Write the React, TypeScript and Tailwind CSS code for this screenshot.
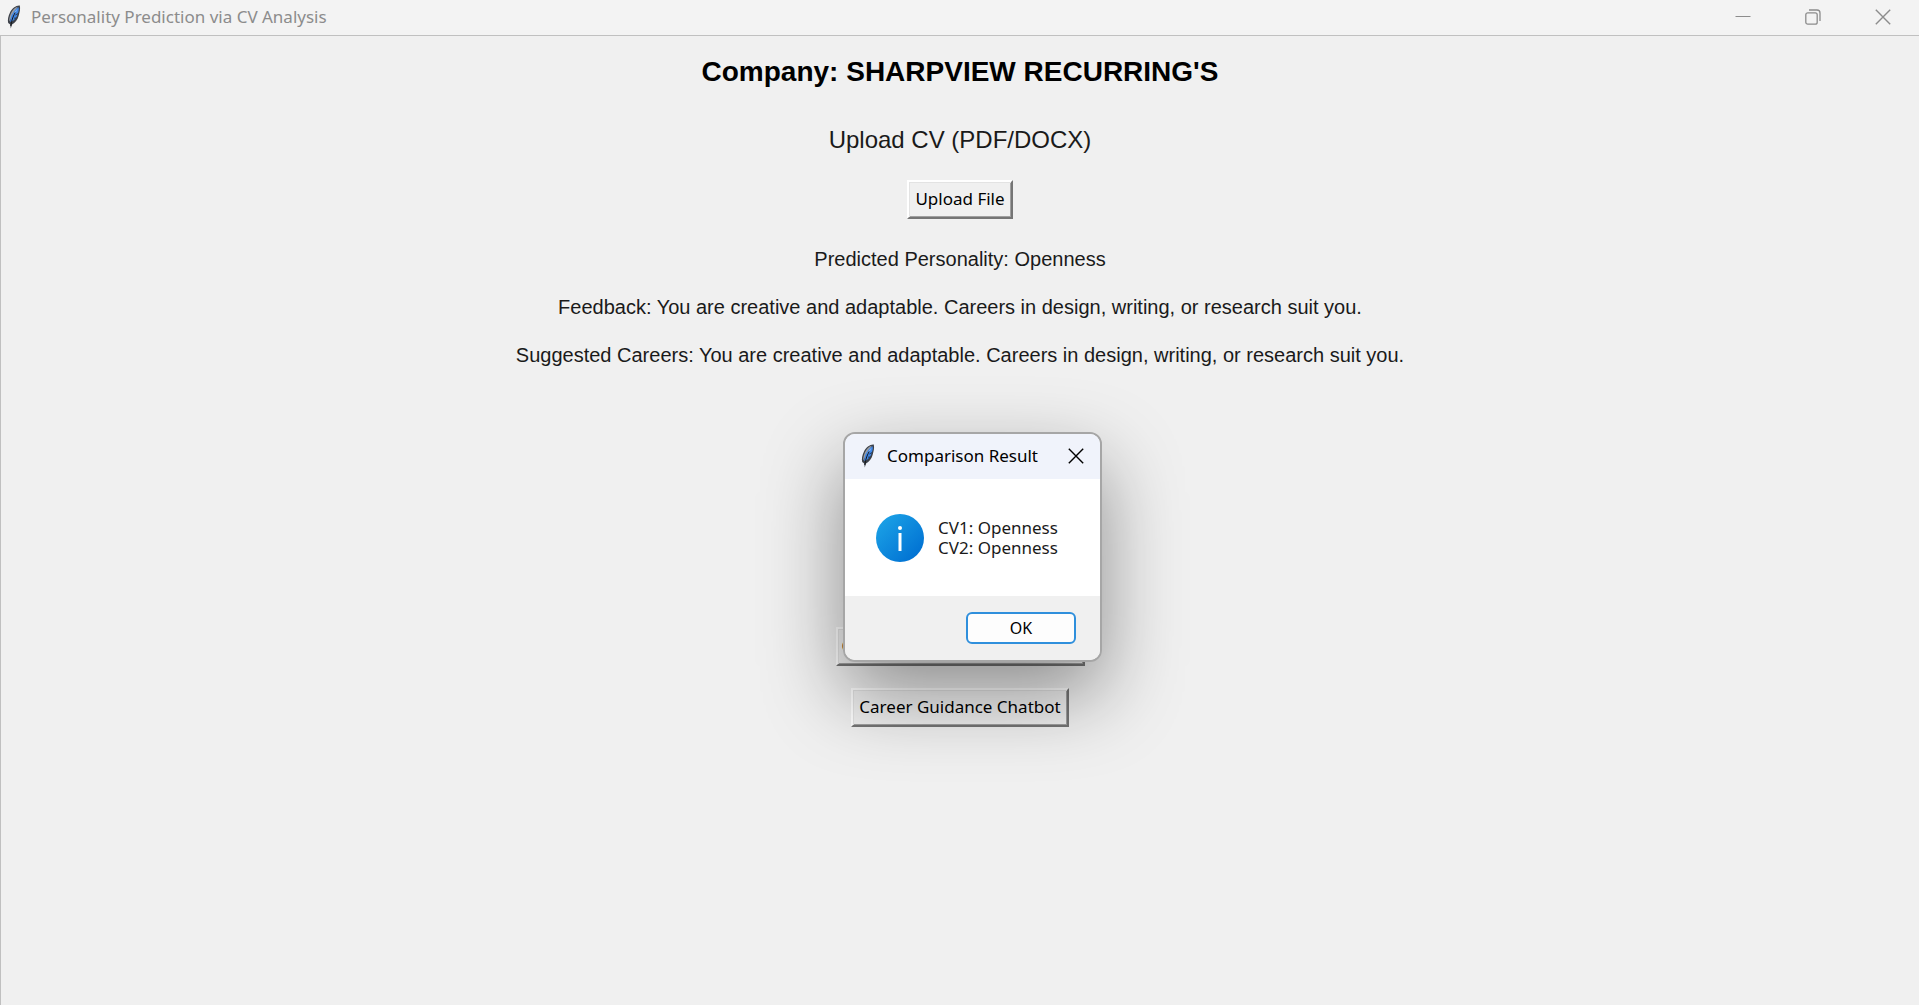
import type { ReactNode } from "react";

function Feather({ className }: { className: string }) {
  return (
    <svg viewBox="0 0 14 24" className={className} aria-hidden="true">
      <path
        d="M12.800 .6C9.200 .2 5 3.400 3 7.400 1.200 11 .4 15 1.200 18L3.200 19.400 3.800 23.600 5 19.600C8.200 18 10.600 14.800 11.600 11 12.600 7.600 13.600 3.800 12.800 .6Z"
        fill="#3c4048"
      />
      <path d="M10.800 1.800C8 2.400 5.400 5.200 3.900 8.400 2.600 11.400 1.900 14.400 2.300 16.400L5.600 10.600Z" fill="#9a9da3" />
      <path d="M11.600 2.200C9 3.400 5.800 7.400 4.200 11.200L3 16.800C6.800 16.400 9.400 13 10.400 9.800 11.400 7 12.200 4.600 11.600 2.200Z" fill="#3f86e6" />
      <path d="M10.600 3.800C9 5 7.200 7.600 6 10.400L8.800 7.600Z" fill="#8dbbf5" />
      <path d="M8.200 7.400C6.600 10.400 4.600 14.600 3.800 21" stroke="#15181d" strokeWidth="1" fill="none" />
      <path d="M11 8.600L8.400 10M9.400 13L7 13.200" stroke="#1d2a40" strokeWidth=".8" />
    </svg>
  );
}

function Cross({ className }: { className: string }) {
  return (
    <svg viewBox="0 0 16 16" className={className} fill="none" stroke="currentColor" aria-hidden="true">
      <path d="M.8 .8 15.200 15.200M15.200 .8 .8 15.200" strokeWidth="1.400" />
    </svg>
  );
}

function RaisedButton({ children, className }: { children: ReactNode; className: string }) {
  return (
    <button
      type="button"
      className={`h-[39px] border-2 border-t-white border-l-white border-r-[#757575] border-b-[#757575] bg-[#f0f0f0] pb-0.5 font-['Noto_Sans',sans-serif] text-[17px] leading-6 whitespace-nowrap text-black shadow-[inset_1px_1px_0_#e3e3e3,inset_-1px_-1px_0_#a0a0a0] ${className}`}
    >
      {children}
    </button>
  );
}

export default function App() {
  return (
    <div className="relative flex min-h-screen flex-col overflow-hidden bg-[#f0f0f0] font-['Liberation_Sans',sans-serif] text-[#1a1a1a]">
      <header className="flex h-9 items-center border-b border-[#c0c0c0] bg-[#f3f3f3] pr-7 pb-0.5 pl-[7px] text-[#8c8c8c]">
        <Feather className="h-6 w-3.5" />
        <span className="ml-2.5 font-['Noto_Sans',sans-serif] text-[17px] leading-6">
          Personality Prediction via CV Analysis
        </span>
        <div className="ml-auto flex items-center gap-[54px]">
          <button type="button" aria-label="Minimize" className="h-4 w-4">
            <svg viewBox="0 0 16 16" className="h-4 w-4" aria-hidden="true">
              <path d="M.5 7.500H15.500" stroke="currentColor" />
            </svg>
          </button>
          <button type="button" aria-label="Restore" className="h-4 w-4">
            <svg viewBox="0 0 16 16" className="h-4 w-4" fill="none" stroke="currentColor" strokeWidth="1.300" aria-hidden="true">
              <rect x=".8" y="3.800" width="11.400" height="11.400" rx="2" />
              <path d="M4 1H12Q15 1 15 4V12" />
            </svg>
          </button>
          <button type="button" aria-label="Close" className="h-4 w-4">
            <Cross className="h-4 w-4" />
          </button>
        </div>
      </header>

      <main className="flex flex-1 flex-col items-center border-l border-[#c0c0c0]">
        <h1 className="mt-5 text-[28px] leading-8 font-bold text-black">Company: SHARPVIEW RECURRING'S</h1>
        <h2 className="mt-9 text-[24px] leading-8">Upload CV (PDF/DOCX)</h2>
        <RaisedButton className="mt-6 px-1.5">Upload File</RaisedButton>
        <p className="mt-7 text-[20px] leading-6">Predicted Personality: Openness</p>
        <p className="mt-6 text-[20px] leading-6">
          Feedback: You are creative and adaptable. Careers in design, writing, or research suit you.
        </p>
        <p className="mt-6 text-[20px] leading-6">
          Suggested Careers: You are creative and adaptable. Careers in design, writing, or research suit you.
        </p>
        <RaisedButton className="mt-[260px] w-[249px] px-1 text-left">C</RaisedButton>
        <RaisedButton className="mt-[22px] px-1.5">Career Guidance Chatbot</RaisedButton>
      </main>

      <section
        role="dialog"
        aria-labelledby="result-title"
        className="absolute top-[432px] left-[843px] w-[259px] overflow-hidden rounded-xl border-2 border-[#a6a6a6] bg-white font-['Noto_Sans',sans-serif] text-black shadow-[0_32px_80px_rgba(0,0,0,0.42)]"
      >
        <div className="flex h-[45px] items-center bg-[#f0f3fb] px-4 pb-0.5">
          <Feather className="h-6 w-3.5" />
          <h2 id="result-title" className="ml-3 text-[17px] leading-6 whitespace-nowrap">
            Comparison Result
          </h2>
          <button type="button" aria-label="Close dialog" className="ml-auto h-4 w-4">
            <Cross className="h-4 w-4" />
          </button>
        </div>
        <div className="flex h-[117px] items-center gap-3.5 pl-[31px]">
          <svg viewBox="0 0 48 48" className="h-12 w-12 shrink-0" aria-hidden="true">
            <defs>
              <linearGradient id="info-fill" x1="0" y1="0" x2="1" y2="1">
                <stop offset="0.1" stopColor="#1ba1e6" />
                <stop offset="0.9" stopColor="#0070d2" />
              </linearGradient>
            </defs>
            <circle cx="24" cy="24" r="24" fill="url(#info-fill)" />
            <circle cx="24" cy="14" r="2" fill="#fff" />
            <rect x="22.500" y="19" width="3" height="18" fill="#fff" />
          </svg>
          <p className="text-[17px] leading-5 whitespace-nowrap text-[#1a1a1a]">
            CV1: Openness
            <br />
            CV2: Openness
          </p>
        </div>
        <div className="flex h-16 items-center justify-end bg-[#f0f0f0] pr-6">
          <button
            type="button"
            className="h-8 w-[110px] rounded-md border-2 border-[#2f8fdc] bg-[#fdfdfd] text-[16px] leading-6"
          >
            OK
          </button>
        </div>
      </section>
    </div>
  );
}
